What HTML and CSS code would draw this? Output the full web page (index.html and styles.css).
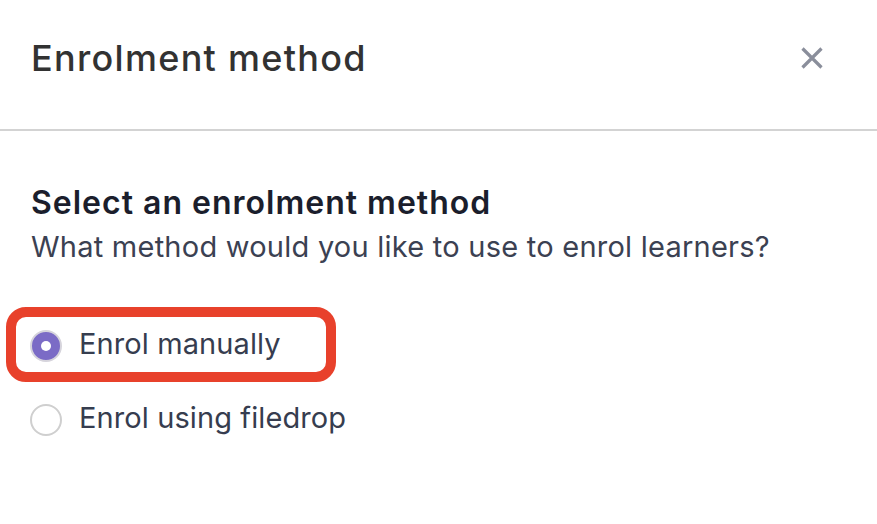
FILE: index.html
```html
<!DOCTYPE html>
<html lang="en">
<head>
<meta charset="utf-8">
<title>Enrolment method</title>
<link rel="stylesheet" href="styles.css">
</head>
<body>
<div class="modal">
  <header class="modal-header">
    <h1 class="modal-title">Enrolment method</h1>
    <button class="close" aria-label="Close">
      <svg width="22" height="22" viewBox="0 0 22 22"><path d="M1.5 1.5 L20.5 20.5 M20.5 1.5 L1.5 20.5" stroke="#8a8e9b" stroke-width="3.2" fill="none"/></svg>
    </button>
  </header>
  <main class="modal-body">
    <h2 class="section-title">Select an enrolment method</h2>
    <p class="section-sub">What method would you like to use to enrol learners?</p>
    <div class="options">
      <label class="option">
        <span class="radio radio-checked"></span>
        <span class="option-label">Enrol manually</span>
        <span class="highlight"></span>
      </label>
      <label class="option">
        <span class="radio"></span>
        <span class="option-label">Enrol using filedrop</span>
      </label>
    </div>
  </main>
</div>
</body>
</html>
```
FILE: styles.css
```css
* { box-sizing: border-box; }
html, body { margin: 0; padding: 0; background: #fff; }
body { font-family: "Inter", "Noto Sans", sans-serif; width: 877px; height: 524px; overflow: hidden; }

.modal-header {
  display: flex;
  justify-content: space-between;
  align-items: flex-start;
  height: 131px;
  padding: 36px 54px 0 31px;
  border-bottom: 2px solid #d3d3d3;
}
.modal-title {
  margin: 0;
  font-size: 36px;
  line-height: 44px;
  font-weight: 500;
  letter-spacing: 1.3px;
  color: #323232;
}
.close {
  margin-top: 11px;
  padding: 0;
  border: 0;
  background: none;
  width: 22px;
  height: 22px;
  display: block;
}
.close svg { display: block; }

.modal-body { padding: 52px 31px 0 31px; }
.section-title {
  margin: 0;
  font-size: 32px;
  line-height: 40px;
  font-weight: 600;
  letter-spacing: 1px;
  color: #1b1e2c;
}
.section-sub {
  margin: 3px 0 0 0;
  font-size: 29px;
  line-height: 42px;
  font-weight: 400;
  letter-spacing: 0.24px;
  color: #3b4152;
}
.options {
  margin-top: 56px;
  display: flex;
  flex-direction: column;
  gap: 34px;
}
.option {
  position: relative;
  display: flex;
  align-items: center;
  gap: 17px;
  height: 40px;
}
.radio {
  width: 32px;
  height: 32px;
  margin-left: -1px;
  margin-top: 4px;
  border-radius: 50%;
  border: 2px solid #cfcfcf;
  background: #fff;
  flex: none;
  display: flex;
  align-items: center;
  justify-content: center;
}
.radio-checked {
  background: #7b6bc6;
  border-color: #d6d4dc;
}
.radio-checked::after {
  content: "";
  width: 10px;
  height: 10px;
  border-radius: 50%;
  background: #fff;
}
.option-label {
  font-size: 29px;
  line-height: 40px;
  letter-spacing: 0.1px;
  color: #363d4f;
}
.highlight {
  position: absolute;
  left: -25px;
  top: -17px;
  width: 330px;
  height: 75px;
  border: 10px solid #e8412b;
  border-radius: 20px;
  pointer-events: none;
}
```
